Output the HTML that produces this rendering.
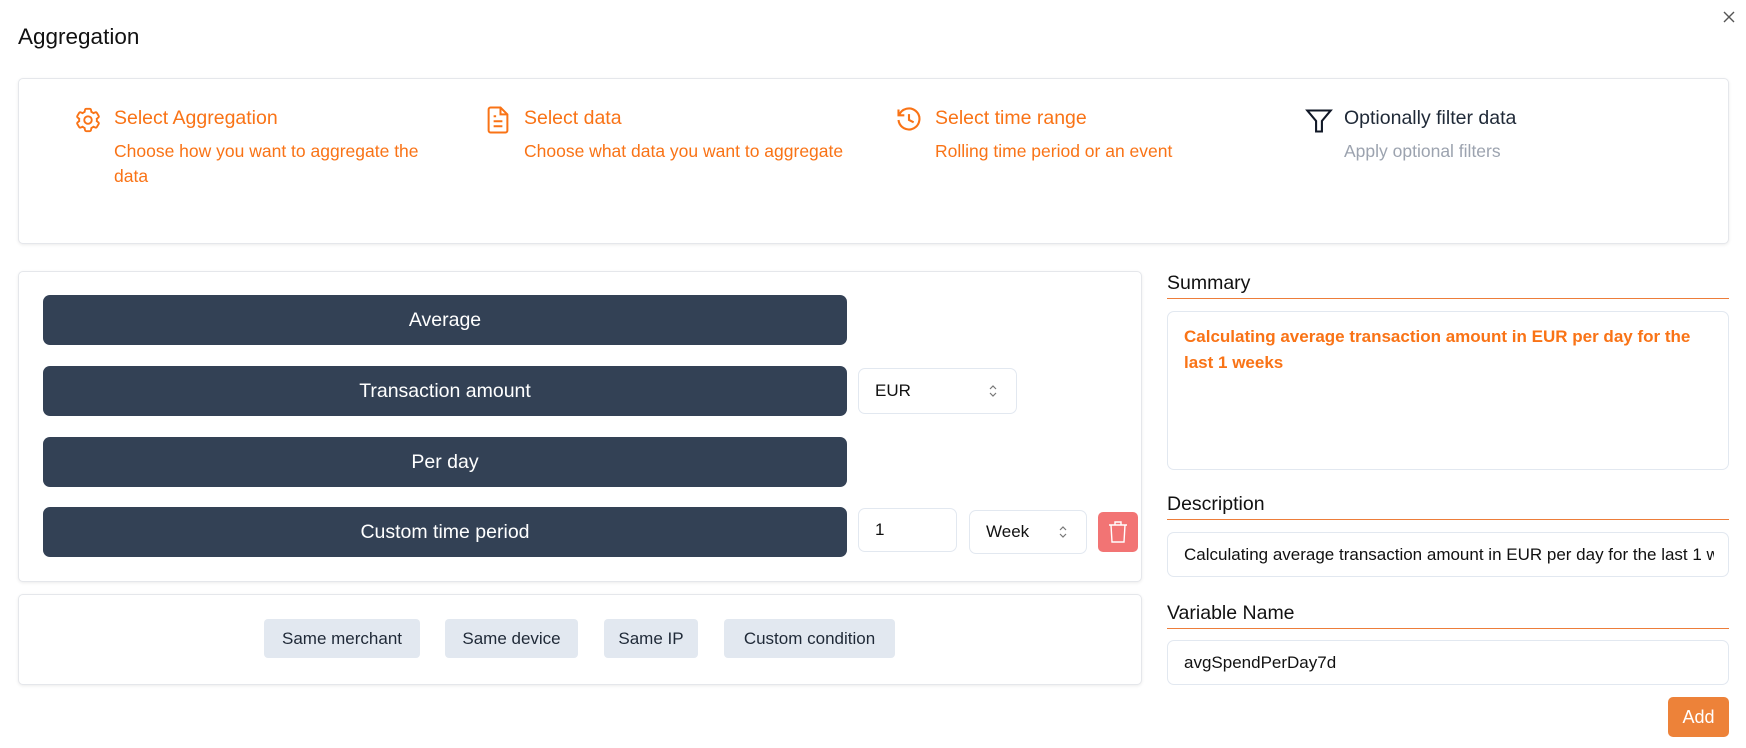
<!DOCTYPE html>
<html><head><style>
*{box-sizing:border-box;margin:0;padding:0}
body{width:1746px;height:748px;background:#fff;font-family:"Liberation Sans",sans-serif;position:relative;overflow:hidden;color:#111827}
.a{position:absolute}
.card{position:absolute;border:1px solid #e5e7eb;border-radius:5px;box-shadow:0 1px 3px rgba(0,0,0,.08);background:#fff}
.step .t{font-size:19.5px;color:#f97316;position:absolute;top:0}
.step .d{font-size:17.5px;color:#f97316;position:absolute;top:32px;line-height:25px}
.btn{position:absolute;left:43px;width:804px;height:50px;background:#334155;border-radius:7px;color:#fff;font-size:19.5px;display:flex;align-items:center;justify-content:center}
.inp{position:absolute;border:1px solid #e2e8f0;border-radius:7px;background:#fff;font-size:17px;display:flex;align-items:center;padding-left:16px;color:#111}
.chip{position:absolute;top:619px;height:39px;background:#e2e8f0;border-radius:4px;font-size:17px;color:#1f2937;display:flex;align-items:center;justify-content:center}
.lbl{position:absolute;left:1167px;width:562px;font-size:19.5px;color:#111;border-bottom:1.5px solid #ed7d3a;padding-bottom:3px}
.arr{position:absolute;right:18px;top:50%;transform:translateY(-50%)}
</style></head><body>
<div class="a" style="left:18px;top:24px;font-size:22.5px;color:#111">Aggregation</div>
<svg class="a" style="left:1721px;top:9px" width="16" height="16" viewBox="0 0 16 16"><path d="M3 3L13 13M13 3L3 13" stroke="#555" stroke-width="1.4"/></svg>

<div class="card" style="left:18px;top:78px;width:1711px;height:166px"></div>
<div class="a step" style="left:75px;top:107px;width:400px">
<svg class="a" style="left:-2px;top:-2px" width="30" height="30" viewBox="0 0 24 24" fill="none" stroke="#f97316" stroke-width="1.5"><path d="M9.6 3.9c.1-.5.5-.9 1-.9h2.8c.5 0 .9.4 1 .9l.3 1.6c.6.3 1.1.6 1.6 1l1.5-.6c.5-.2 1 0 1.3.4l1.4 2.4c.3.4.2 1-.2 1.3l-1.3 1c.1.6.1 1.300 0 1.9l1.3 1c.4.3.5.9.2 1.3l-1.4 2.4c-.3.4-.8.6-1.3.4l-1.5-.6c-.5.4-1 .7-1.6 1l-.3 1.6c-.1.5-.5.9-1 .9h-2.8c-.5 0-.9-.4-1-.9l-.3-1.6c-.6-.3-1.100-.6-1.6-1l-1.5.6c-.5.2-1 0-1.3-.4l-1.4-2.4c-.3-.4-.2-1 .2-1.3l1.3-1c-.1-.6-.1-1.3 0-1.9l-1.3-1c-.4-.3-.5-.9-.2-1.3l1.4-2.4c.3-.4.8-.6 1.3-.4l1.5.6c.5-.4 1-.7 1.6-1z"/><circle cx="12" cy="12" r="3"/></svg>
<div class="t" style="left:39px">Select Aggregation</div>
<div class="d" style="left:39px;width:340px">Choose how you want to aggregate the data</div></div>
<div class="a step" style="left:485px;top:107px;width:400px">
<svg class="a" style="left:-2px;top:-3px" width="30" height="32" viewBox="0 0 24 24" fill="none" stroke="#f97316" stroke-width="1.6"><path d="M14 2H6a1.5 1.5 0 0 0-1.5 1.5v17A1.5 1.5 0 0 0 6 22h12a1.5 1.5 0 0 0 1.5-1.5V7.5z"/><path d="M14 2v5.5h5.5M8.5 13h7M8.5 17h7M8.5 9h2"/></svg>
<div class="t" style="left:39px">Select data</div>
<div class="d" style="left:39px">Choose what data you want to aggregate</div></div>
<div class="a step" style="left:896px;top:107px;width:400px">
<svg class="a" style="left:-1px;top:-1px" width="28" height="28" viewBox="0 0 24 24" fill="none" stroke="#f97316" stroke-width="1.8"><path d="M3 3v5h5"/><path d="M3.5 8A9 9 0 1 1 3 12"/><path d="M12 7v5l4 2"/></svg>
<div class="t" style="left:39px">Select time range</div>
<div class="d" style="left:39px">Rolling time period or an event</div></div>
<div class="a step" style="left:1305px;top:107px;width:400px">
<svg class="a" style="left:0;top:-1px" width="28" height="30" viewBox="0 0 24 24" fill="none" stroke="#111827" stroke-width="1.8"><path d="M2 3h20l-7.5 9v9h-5v-9z"/></svg>
<div class="t" style="left:39px;color:#1f2937">Optionally filter data</div>
<div class="d" style="left:39px;color:#9ca3af">Apply optional filters</div></div>

<div class="card" style="left:18px;top:271px;width:1124px;height:311px"></div>
<div class="btn" style="top:295px">Average</div>
<div class="btn" style="top:366px">Transaction amount</div>
<div class="btn" style="top:437px">Per day</div>
<div class="btn" style="top:507px">Custom time period</div>
<div class="inp" style="left:858px;top:368px;width:159px;height:46px">EUR<svg class="arr" width="10" height="14" viewBox="0 0 10 14" fill="none" stroke="#777" stroke-width="1.2"><path d="M2 5l3-3 3 3M2 9l3 3 3-3"/></svg></div>
<div class="inp" style="left:858px;top:508px;width:99px;height:44px">1</div>
<div class="inp" style="left:969px;top:510px;width:118px;height:44px">Week<svg class="arr" width="10" height="14" viewBox="0 0 10 14" fill="none" stroke="#777" stroke-width="1.2"><path d="M2 5l3-3 3 3M2 9l3 3 3-3"/></svg></div>
<div class="a" style="left:1098px;top:512px;width:40px;height:40px;background:#f27474;border-radius:5px"><svg class="a" style="left:9px;top:8px" width="22" height="24" viewBox="0 0 22 24" fill="none" stroke="#fff" stroke-width="1.4"><path d="M2 5h18M8 5V2h6v3M4 5l1 17h12l1-17"/></svg></div>

<div class="card" style="left:18px;top:594px;width:1124px;height:91px"></div>
<div class="chip" style="left:264px;width:156px">Same merchant</div>
<div class="chip" style="left:445px;width:133px">Same device</div>
<div class="chip" style="left:604px;width:94px">Same IP</div>
<div class="chip" style="left:724px;width:171px">Custom condition</div>

<div class="lbl" style="top:272px">Summary</div>
<div class="inp" style="left:1167px;top:311px;width:562px;height:159px;align-items:flex-start;padding:12px 16px;color:#f97316;font-weight:bold;font-size:17px;line-height:26px">Calculating average transaction amount in EUR per day for the last 1 weeks</div>
<div class="lbl" style="top:493px">Description</div>
<div class="inp" style="left:1167px;top:532px;width:562px;height:45px;white-space:nowrap;overflow:hidden;padding-right:14px"><span style="display:block;overflow:hidden;width:100%">Calculating average transaction amount in EUR per day for the last 1 weeks</span></div>
<div class="lbl" style="top:602px">Variable Name</div>
<div class="inp" style="left:1167px;top:640px;width:562px;height:45px">avgSpendPerDay7d</div>
<div class="a" style="left:1668px;top:697px;width:61px;height:40px;background:#ed8239;border-radius:5px;color:#fff;font-size:18px;display:flex;align-items:center;justify-content:center">Add</div>
</body></html>
